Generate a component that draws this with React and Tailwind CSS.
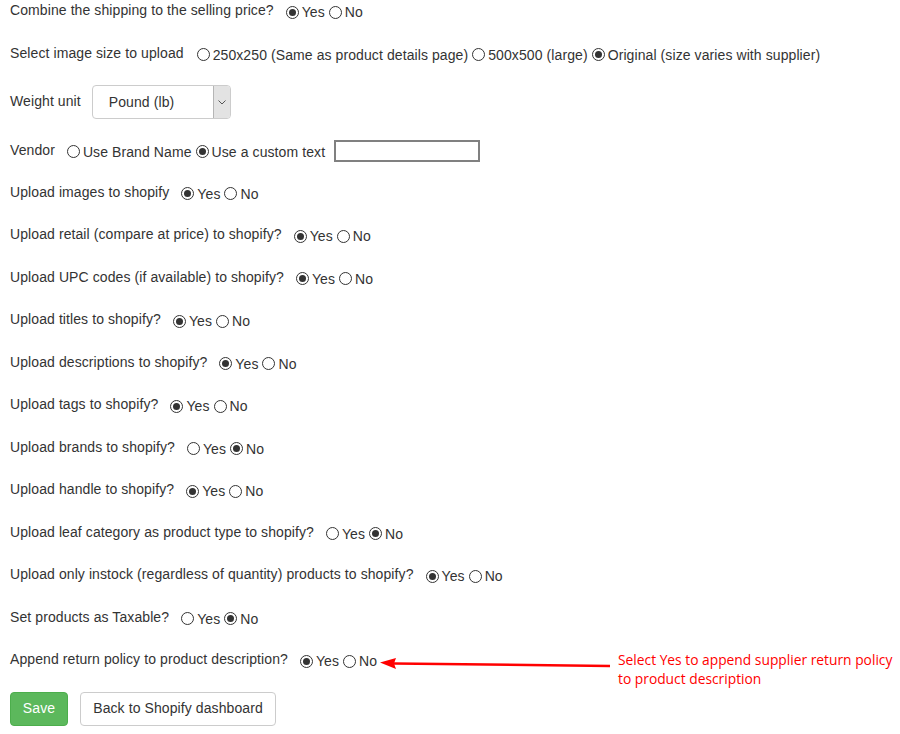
import React from "react";

function Radio({ checked, label }) {
  return (
    <span className="inline-flex items-center">
      <span className="w-[13px] h-[13px] rounded-full border border-[#333] bg-white flex items-center justify-center shrink-0">
        {checked && <span className="w-[7px] h-[7px] rounded-full bg-[#333]" />}
      </span>
      <span className="ml-[3px] mr-[4px]">{label}</span>
    </span>
  );
}

function YesNo({ title, yes, h = "h-[42.5px]", children }) {
  return (
    <div className={`${h} relative`}>
      <div className="flex items-start leading-[20px]">
        <span className="mr-[12px]">{title}</span>
        <span className="flex items-center mt-[2px]">
          <Radio checked={yes} label="Yes" />
          <Radio checked={!yes} label="No" />
        </span>
      </div>
      {children}
    </div>
  );
}

export default function App() {
  return (
    <div
      className="bg-white text-[#333] text-[14px] tracking-[0.09px] pl-[10px] w-[900px] h-[734px] overflow-hidden"
      style={{ fontFamily: '"Liberation Sans", Arial, sans-serif' }}
    >
      <YesNo title="Combine the shipping to the selling price?" yes={true} />

      <div className="h-[42.5px]">
        <div className="flex items-start leading-[20px]">
          <span className="mr-[13px]">Select image size to upload</span>
          <span className="flex items-center mt-[2px]">
            <Radio checked={false} label="250x250 (Same as product details page)" />
            <Radio checked={false} label="500x500 (large)" />
            <Radio checked={true} label="Original (size varies with supplier)" />
          </span>
        </div>
      </div>

      <div className="h-[54.5px] flex items-start">
        <span className="leading-[20px] mt-[6px] mr-[11px]">Weight unit</span>
        <div className="w-[139px] h-[34px] border border-[#ccc] rounded-[4px] bg-white flex items-stretch overflow-hidden">
          <span className="flex-1 pl-[16px] flex items-center">Pound (lb)</span>
          <span className="w-[17px] bg-[#e3e3e3] border-l border-[#b5b5b5] flex items-center justify-center">
            <svg width="8" height="5" viewBox="0 0 8 5">
              <path d="M0.5 0.5 L4 4 L7.5 0.5" fill="none" stroke="#555" strokeWidth="1" />
            </svg>
          </span>
        </div>
      </div>

      <div className="h-[42px] flex items-start">
        <span className="leading-[20px] mr-[12px]">Vendor</span>
        <span className="flex items-center mt-[2px] leading-[20px]">
          <Radio checked={false} label="Use Brand Name" />
          <Radio checked={true} label="Use a custom text" />
        </span>
        <div className="ml-[5px] w-[146px] h-[22px] border-2 border-[#808080] bg-white" />
      </div>

      <YesNo title="Upload images to shopify" yes={true} />
      <YesNo title="Upload retail (compare at price) to shopify?" yes={true} />
      <YesNo title="Upload UPC codes (if available) to shopify?" yes={true} />
      <YesNo title="Upload titles to shopify?" yes={true} />
      <YesNo title="Upload descriptions to shopify?" yes={true} />
      <YesNo title="Upload tags to shopify?" yes={true} />
      <YesNo title="Upload brands to shopify?" yes={false} />
      <YesNo title="Upload handle to shopify?" yes={true} />
      <YesNo title="Upload leaf category as product type to shopify?" yes={false} />
      <YesNo title="Upload only instock (regardless of quantity) products to shopify?" yes={true} />
      <YesNo title="Set products as Taxable?" yes={false} />
      <YesNo title="Append return policy to product description?" yes={true}>
        <svg
          className="absolute left-[360px] top-[5px]"
          width="250"
          height="20"
          viewBox="0 0 250 20"
        >
          <path d="M24 8.2 L240 10.8 L240 13.2 L24 10.8 Z" fill="#ff0000" />
          <path d="M10 8.6 L26 4 L24 9.5 L26 15 Z" fill="#ff0000" />
        </svg>
        <div
          className="absolute left-[608px] top-[1px] text-[#ff0000] text-[13.8px] leading-[19px] tracking-normal"
          style={{ fontFamily: '"Open Sans", "DejaVu Sans", sans-serif' }}
        >
          <div>Select Yes to append supplier return policy</div>
          <div>to product description</div>
        </div>
      </YesNo>

      <div className="flex gap-[12px]">
        <button className="h-[34px] w-[58px] rounded-[4px] bg-[#5cb85c] border border-[#4cae4c] text-white">
          Save
        </button>
        <button className="h-[34px] w-[196px] rounded-[4px] bg-white border border-[#ccc] text-[#333]">
          Back to Shopify dashboard
        </button>
      </div>
    </div>
  );
}
